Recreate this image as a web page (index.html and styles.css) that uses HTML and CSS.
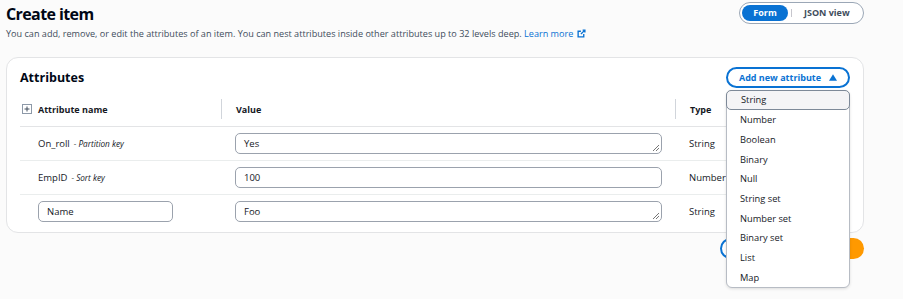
FILE: index.html
```html
<!DOCTYPE html>
<html>
<head>
<meta charset="utf-8">
<link rel="stylesheet" href="styles.css">
</head>
<body>
<div class="page">
  <div class="header">
    <div class="header-text">
      <h1 class="title">Create item</h1>
      <p class="desc">You can add, remove, or edit the attributes of an item. You can nest attributes inside other attributes up to 32 levels deep. <a class="link">Learn more <svg class="ext" viewBox="0 0 16 16" width="9" height="9"><path d="M10 2h4v4M14 2L7 9M12 9v5H2V4h5" fill="none" stroke="#0972d3" stroke-width="2.4"/></svg></a></p>
    </div>
    <div class="toggle">
      <span class="seg seg-on">Form</span>
      <span class="seg-sep"></span>
      <span class="seg">JSON view</span>
    </div>
  </div>

  <div class="card">
    <div class="card-head">
      <h2 class="card-title">Attributes</h2>
      <div class="add-wrap">
        <button class="add-btn">Add new attribute <svg viewBox="0 0 10 8" width="8" height="7"><path d="M5 0L10 8H0z" fill="#0972d3"/></svg></button>
        <ul class="menu">
          <li class="menu-item active">String</li>
          <li class="menu-item">Number</li>
          <li class="menu-item">Boolean</li>
          <li class="menu-item">Binary</li>
          <li class="menu-item">Null</li>
          <li class="menu-item">String set</li>
          <li class="menu-item">Number set</li>
          <li class="menu-item">Binary set</li>
          <li class="menu-item">List</li>
          <li class="menu-item">Map</li>
        </ul>
      </div>
    </div>

    <div class="table">
      <div class="row head-row">
        <div class="cell c-name"><svg class="expand" viewBox="0 0 10 10" width="10" height="10"><rect x="0.5" y="0.5" width="9" height="9" fill="#fff" stroke="#8d99a8"/><path d="M5 2.5v5M2.5 5h5" stroke="#414d5c" stroke-width="1"/></svg><span class="th">Attribute name</span></div>
        <div class="cell c-val"><span class="th">Value</span></div>
        <div class="cell c-type"><span class="th">Type</span></div>
      </div>
      <div class="row">
        <div class="cell c-name"><span class="attr">On_roll</span><span class="key">- Partition key</span></div>
        <div class="cell c-val"><div class="field ta">Yes<span class="grip"></span></div></div>
        <div class="cell c-type">String</div>
      </div>
      <div class="row">
        <div class="cell c-name"><span class="attr">EmpID</span><span class="key">- Sort key</span></div>
        <div class="cell c-val"><div class="field">100</div></div>
        <div class="cell c-type">Number</div>
      </div>
      <div class="row last">
        <div class="cell c-name"><div class="field name-field">Name</div></div>
        <div class="cell c-val"><div class="field ta">Foo<span class="grip"></span></div></div>
        <div class="cell c-type">String</div>
      </div>
    </div>
  </div>

  <div class="actions">
    <button class="btn btn-normal" aria-label="Cancel"></button>
    <button class="btn btn-primary" aria-label="Create item"></button>
  </div>
</div>
</body>
</html>
```

FILE: styles.css
```css
* { box-sizing: border-box; }
html, body { margin: 0; padding: 0; }
html { min-height: 100%; background: #fbfbfb; }
body {
  min-height: 299px;
  background: #fbfbfb;
  font-family: "Open Sans", "Noto Sans", sans-serif;
  color: #16191f;
  font-size: 9.5px;
}
.page {
  padding: 2px 39px 0 6px;
  min-height: 299px;
}
.header {
  display: flex;
  justify-content: space-between;
  align-items: flex-start;
}
.title {
  margin: 1px 0 0 0;
  font-size: 16px;
  font-weight: 700;
  line-height: 22px;
  letter-spacing: -0.6px;
  color: #000716;
}
.desc {
  margin: 2px 0 0 0;
  font-size: 9.1px;
  line-height: 14px;
  color: #414d5c;
  white-space: nowrap;
}
.link {
  color: #0972d3;
  font-weight: 400;
}
.ext { vertical-align: -1px; margin-left: 1px; }
.toggle {
  display: flex;
  align-items: center;
  height: 22px;
  border: 1px solid #9ba7b6;
  border-radius: 11px;
  padding: 0 2px;
  width: 125px;
  background: #fff;
  white-space: nowrap;
}
.seg {
  font-weight: 700;
  font-size: 9px;
  color: #414d5c;
  padding: 0 0 0 12px;
  line-height: 16px;
}
.seg-on {
  background: #0972d3;
  color: #fff;
  border-radius: 9px;
  width: 46px;
  text-align: center;
  padding: 0;
}
.seg-sep {
  width: 1px;
  height: 8px;
  background: #c6c6cd;
  margin: 0 0 0 3px;
}
.card {
  margin-top: 16px;
  background: #fff;
  border: 1px solid #e3e4e6;
  border-radius: 12px;
  padding: 8px 13px 4px 13px;
}
.card-head {
  display: flex;
  justify-content: space-between;
  align-items: center;
  height: 22px;
}
.card-title {
  margin: 0;
  font-size: 12.5px;
  font-weight: 700;
  color: #000716;
}
.add-wrap { position: relative; display: flex; }
.add-btn {
  display: flex;
  align-items: center;
  gap: 8px;
  height: 21px;
  width: 124px;
  justify-content: center;
  border: 2px solid #0972d3;
  border-radius: 11px;
  background: #fff;
  color: #0972d3;
  font-family: inherit;
  font-weight: 700;
  font-size: 9px;
  padding: 0 4px;
  white-space: nowrap;
}
.menu {
  position: absolute;
  top: 23px;
  left: 0;
  width: 124px;
  margin: 0;
  padding: 0;
  list-style: none;
  background: #fff;
  border: 1px solid #b7bcc4;
  border-radius: 6px;
  box-shadow: 0 1px 3px rgba(0,0,0,0.12);
  z-index: 5;
}
.menu-item {
  height: 19.7px;
  line-height: 19.7px;
  padding-left: 13px;
  font-size: 9.3px;
  color: #16191f;
  white-space: nowrap;
}
.menu-item.active {
  background: #f4f4f6;
  border: 1px solid #7d8998;
  border-radius: 5px;
  margin: -1px -1px 0 -1px;
  height: 20.7px;
  padding-left: 14px;
  line-height: 18.7px;
}
.table { margin-top: 11px; }
.row {
  display: flex;
  align-items: center;
  height: 34px;
  border-bottom: 1px solid #eaeded;
}
.head-row {
  height: 28px;
  align-items: flex-start;
  border-bottom: 1px solid #e3e4e6;
}
.row.last { border-bottom: none; height: 33px; }
.cell { display: flex; align-items: center; white-space: nowrap; }
.c-name { width: 201px; padding-left: 18px; }
.c-val { width: 454px; padding-left: 14px; }
.c-type { flex: 1; padding-left: 14px; }
.head-row .cell { height: 20px; }
.head-row .c-val, .head-row .c-type { border-left: 1px solid #d1d5db; }
.head-row .c-name { padding-left: 2px; }
.expand { margin-right: 6px; }
.th { font-weight: 700; font-size: 9px; color: #16191f; }
.attr { font-size: 9.5px; }
.key { font-size: 8.2px; font-style: italic; margin-left: 4px; color: #16191f; }
.c-type { font-size: 9.5px; }
.field {
  position: relative;
  width: 427px;
  height: 21px;
  border: 1px solid #9ba2ad;
  border-radius: 5px;
  padding-left: 8px;
  display: flex;
  align-items: center;
  font-size: 9.5px;
  background: #fff;
}
.name-field { width: 135px; }
.grip {
  position: absolute;
  right: 2px;
  bottom: 2px;
  width: 6px;
  height: 6px;
  background: linear-gradient(135deg, transparent 45%, #777 45%, #777 55%, transparent 55%, transparent 70%, #777 70%, #777 80%, transparent 80%);
}
.actions {
  display: flex;
  justify-content: flex-end;
  gap: 8px;
  margin-top: 5px;
}
.btn {
  height: 21px;
  border-radius: 11px;
  padding: 0;
}
.btn-normal { border: 2px solid #0972d3; background: #fff; width: 60px; }
.btn-primary { border: none; background: #ff9900; width: 76px; }
```
